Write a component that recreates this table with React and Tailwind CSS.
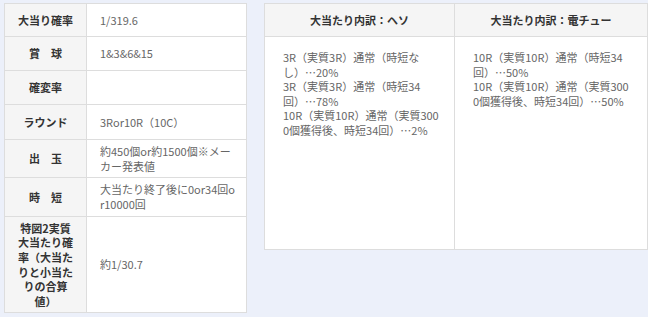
import React from "react";

const rows = [
  { label: ["大当り確率"], value: ["1/319.6"], h: "h-[33px]" },
  { label: ["賞　球"], value: ["1&3&6&15"], h: "h-[34px]" },
  { label: ["確変率"], value: [], h: "h-[34px]" },
  { label: ["ラウンド"], value: ["3Ror10R（10C）"], h: "h-[35px]" },
  { label: ["出　玉"], value: ["約450個or約1500個※メー", "カー発表値"], h: "h-[38px]" },
  { label: ["時　短"], value: ["大当たり終了後に0or34回o", "r10000回"], h: "h-[39px]" },
  {
    label: ["特図2実質", "大当たり確", "率（大当た", "りと小当た", "りの合算", "値）"],
    value: ["約1/30.7"],
    h: "h-[96px]",
  },
];

function Lines({ lines }) {
  return lines.map((l, i) => (
    <div key={i} className="whitespace-nowrap">
      {l}
    </div>
  ));
}

export default function App() {
  return (
    <div className="w-[648px] h-[317px] bg-[#ecf0fa] flex items-start pt-[3px] pl-[4px] gap-[17px] font-['Noto_Sans_CJK_JP','Noto_Sans',sans-serif] text-[11px] leading-[14.6px] [text-spacing-trim:space-all]">
      <table className="w-[242px] shrink-0 border-collapse table-fixed bg-white">
        <colgroup>
          <col className="w-[82px]" />
          <col className="w-[160px]" />
        </colgroup>
        <tbody>
          {rows.map((r, i) => (
            <tr key={i} className={r.h}>
              <th className="border border-[#dddddd] bg-[#f5f5f5] text-[#333333] font-bold text-center align-middle p-0">
                <Lines lines={r.label} />
              </th>
              <td className="border border-[#dddddd] text-[#666666] align-middle pl-[13px] pr-[6px] py-0">
                <Lines lines={r.value} />
              </td>
            </tr>
          ))}
        </tbody>
      </table>
      <table className="w-[383px] shrink-0 border-collapse table-fixed bg-white">
        <colgroup>
          <col className="w-[190px]" />
          <col className="w-[193px]" />
        </colgroup>
        <thead>
          <tr className="h-[33px]">
            <th className="border border-[#dddddd] bg-[#f5f5f5] text-[#333333] font-bold text-center align-middle p-0">
              大当たり内訳：ヘソ
            </th>
            <th className="border border-[#dddddd] bg-[#f5f5f5] text-[#333333] font-bold text-center align-middle p-0">
              大当たり内訳：電チュー
            </th>
          </tr>
        </thead>
        <tbody>
          <tr className="h-[213px]">
            <td className="border border-[#dddddd] text-[#666666] align-top pl-[18px] pr-0 pt-[13px]">
              <Lines
                lines={[
                  "3R（実質3R）通常（時短な",
                  "し）…20%",
                  "3R（実質3R）通常（時短34",
                  "回）…78%",
                  "10R（実質10R）通常（実質300",
                  "0個獲得後、時短34回）…2%",
                ]}
              />
            </td>
            <td className="border border-[#dddddd] text-[#666666] align-top pl-[18px] pr-0 pt-[13px]">
              <Lines
                lines={[
                  "10R（実質10R）通常（時短34",
                  "回）…50%",
                  "10R（実質10R）通常（実質300",
                  "0個獲得後、時短34回）…50%",
                ]}
              />
            </td>
          </tr>
        </tbody>
      </table>
    </div>
  );
}
